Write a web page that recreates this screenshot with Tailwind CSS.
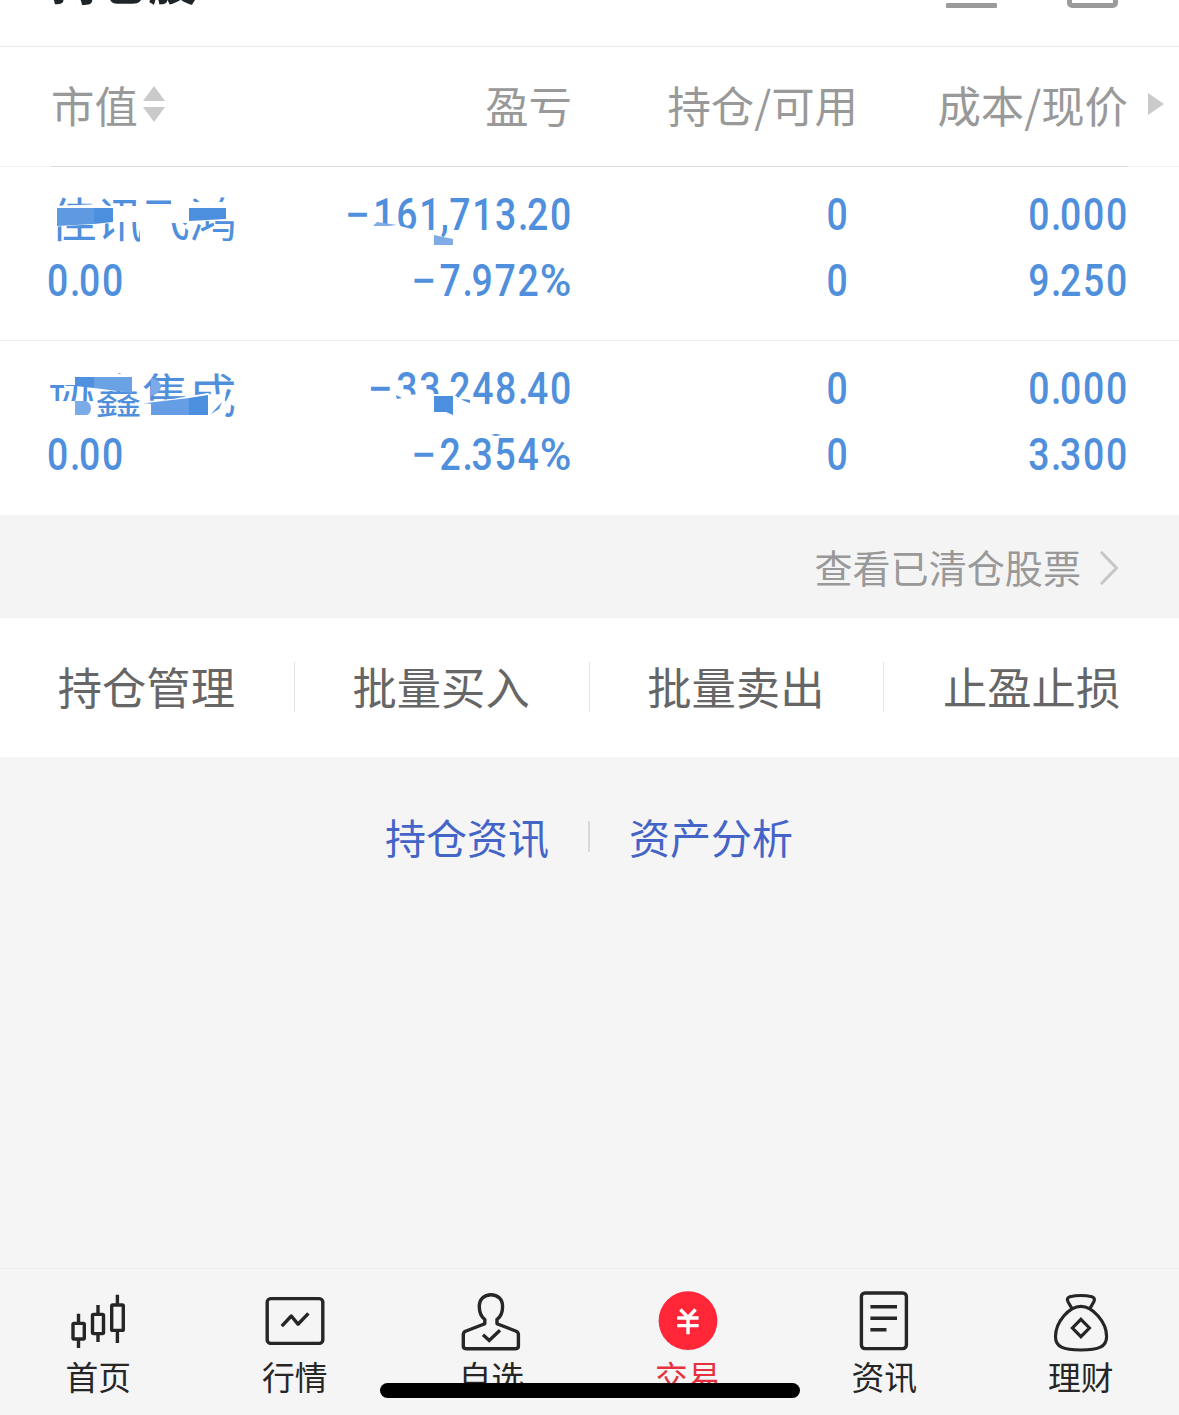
<!DOCTYPE html>
<html lang="zh-CN">
<head>
<meta charset="utf-8">
<title>持仓股</title>
<script src="https://cdn.jsdelivr.net/npm/@tailwindcss/browser@4"></script>
</head>
<body class="w-[1179px] h-[1415px] overflow-hidden bg-[#f5f5f5] font-['Noto_Sans_CJK_SC',sans-serif]">
<div class="relative flex flex-col w-[1179px] h-[1415px] overflow-hidden">

  <!-- Title bar, scrolled mostly out of view -->
  <header class="h-[47px] shrink-0 bg-white border-b border-[#e9e9e9] flex items-start justify-between pl-[51px] pr-[61px] overflow-hidden">
    <h1 class="-mt-[51px] text-[48.5px] leading-[60px] font-bold text-[#1f2428]">持仓股</h1>
    <div class="flex items-start gap-[70px]">
      <div class="mt-[3px] w-[51px] h-[5px] bg-[#9b9b9b] rounded-[1px]"></div>
      <div class="-mt-[42px] w-[51px] h-[50px] border-[5px] border-[#9b9b9b] rounded-[5px]"></div>
    </div>
  </header>

  <!-- Holdings table -->
  <section class="shrink-0 bg-white">
    <div class="h-[119px] pb-[6px] grid grid-cols-[280px_292px_286px_270px_51px] items-center text-[43.4px] leading-[60px] text-[#999] whitespace-nowrap">
      <div class="pl-[51px] flex items-center">市值
        <svg class="ml-[5px]" width="22" height="36" viewBox="0 0 22 36" fill="#cacaca"><path d="M11 0L22 15H0zM11 36L22 21H0z"/></svg>
      </div>
      <div class="text-right">盈亏</div>
      <div class="text-right">持仓/可用</div>
      <div class="text-right">成本/现价</div>
      <svg class="ml-[20px]" width="16" height="22" viewBox="0 0 16 22" fill="#cacaca"><path d="M0 0L16 11L0 22z"/></svg>
    </div>
    <div class="h-px bg-[#f2f2f2] px-[51px]"><div class="h-px bg-[#dcdcdc]"></div></div>

    <!-- Row 1 -->
    <div class="relative h-[174px] pt-[15px] border-b border-[#ececec] grid grid-cols-[280px_292px_286px_270px] text-[#4f8fdb]">
      <div>
        <div class="pl-[50px] h-[66px] pt-[2px] text-[46.6px] leading-[66px]">佳讯飞鸿</div>
        <div class="pl-[47px] font-[Roboto] font-medium text-[44px] leading-[66px] tracking-[2px]"><span class="inline-block origin-left scale-x-[.85]">0<i class="not-italic tracking-[-1.6px]">.</i>00</span></div>
      </div>
      <div class="-mr-[1px] font-[Roboto] font-medium text-[44px] leading-[66px] tracking-[2px] text-right origin-right scale-x-[.85]"><div><span class="inline-block origin-right scale-x-[1.2] mr-[1px]">−</span>161<i class="not-italic -ml-[2px] tracking-[.4px]">,</i>713<i class="not-italic tracking-[-1.6px]">.</i>20</div><div><span class="inline-block origin-right scale-x-[1.2] mr-[1px]">−</span>7<i class="not-italic tracking-[-1.6px]">.</i>972<span class="inline-block origin-right scale-x-[1.15] ml-[4px]">%</span></div></div>
      <div class="pr-[10px] font-[Roboto] font-medium text-[44px] leading-[66px] tracking-[2px] text-right origin-right scale-x-[.85]"><div>0</div><div>0</div></div>
      <div class="-mr-[1px] font-[Roboto] font-medium text-[44px] leading-[66px] tracking-[2px] text-right origin-right scale-x-[.85]"><div>0<i class="not-italic tracking-[-1.6px]">.</i>000</div><div>9<i class="not-italic tracking-[-1.6px]">.</i>250</div></div>
      <!-- Redaction marks -->
      <svg class="absolute left-0 top-0" width="600" height="174" viewBox="0 167 600 174">
        <g fill="#fff">
          <path d="M50 206L104 204L114 208V223L50 227z"/>
          <path d="M100 206H140V204.500H190V222H100zM140 205H165V245H140zM171 196H189V223H171zM186 202H240V219L226 221H186z"/>
          <path d="M372 226L396 225L412 229L422 227V236H372z"/>
        </g>
        <path fill="#5e99e1" d="M57 208H94V224L57 226z"/>
        <path fill="#4d8fdf" d="M94 208H113V222L94 224zM189 208H226V219L189 221z"/>
        <path fill="#80ace6" d="M377 222L397 225L388 226L373 226zM434 235L453 239V245H434z"/>
      </svg>
    </div>

    <!-- Row 2 -->
    <div class="relative h-[174px] pt-[15px] grid grid-cols-[280px_292px_286px_270px] text-[#4f8fdb]">
      <div>
        <div class="pl-[48px] h-[66px] pt-[4px] text-[47px] leading-[66px]">协鑫集成</div>
        <div class="pl-[47px] font-[Roboto] font-medium text-[44px] leading-[66px] tracking-[2px]"><span class="inline-block origin-left scale-x-[.85]">0<i class="not-italic tracking-[-1.6px]">.</i>00</span></div>
      </div>
      <div class="-mr-[1px] font-[Roboto] font-medium text-[44px] leading-[66px] tracking-[2px] text-right origin-right scale-x-[.85]"><div><span class="inline-block origin-right scale-x-[1.2] mr-[1px]">−</span>33<i class="not-italic -ml-[2px] tracking-[.4px]">,</i>248<i class="not-italic tracking-[-1.6px]">.</i>40</div><div><span class="inline-block origin-right scale-x-[1.2] mr-[1px]">−</span>2<i class="not-italic tracking-[-1.6px]">.</i>354<span class="inline-block origin-right scale-x-[1.15] ml-[4px]">%</span></div></div>
      <div class="pr-[10px] font-[Roboto] font-medium text-[44px] leading-[66px] tracking-[2px] text-right origin-right scale-x-[.85]"><div>0</div><div>0</div></div>
      <div class="-mr-[1px] font-[Roboto] font-medium text-[44px] leading-[66px] tracking-[2px] text-right origin-right scale-x-[.85]"><div>0<i class="not-italic tracking-[-1.6px]">.</i>000</div><div>3<i class="not-italic tracking-[-1.6px]">.</i>300</div></div>
      <!-- Redaction marks -->
      <svg class="absolute left-0 top-0" width="600" height="174" viewBox="0 341 600 174">
        <g fill="#fff">
          <path d="M48 368H97V385H48zM48 401H96V422H48zM97 374H141V391H97z"/>
          <path d="M142 404L208 393L214 396L226 394L224 404L228 410L222 422H142z"/>
          <path d="M393 395L440 394V382H449V394L456 396L460 399L472 404V412L455 416H393z"/>
        </g>
        <path fill="#4f90df" d="M75 377H94V388L75 386z"/>
        <path fill="#6ba2e6" d="M94 377H132V393L94 388z"/>
        <path fill="#7aaae8" d="M75 401H86Q91 403 91 409Q90 415 86 415H75zM151 378Q161 380 161 387Q160 394 151 396z"/>
        <path fill="#659ee4" d="M146 403L189 398V415H151V404z"/>
        <path fill="#4d8fdf" d="M189 398L208 395V415H189zM434 396H453V415L446 412L434 412zM396 395L402 398L397 399zM461 399L470 400V403zM491 435Q496 433 501 435L496 436z"/>
        <path fill="#fff" d="M208 402Q212 394 220 394L226 402L216 415H208z"/>
        <path fill="#4d8fdf" d="M211 414L222 402L219 409z"/>
      </svg>
    </div>
  </section>

  <div class="h-[103px] shrink-0 bg-[#f4f4f4] flex items-center justify-end pr-[60px] gap-[18px] text-[38.1px] leading-[60px] text-[#999]">
    <span>查看已清仓股票</span>
    <svg class="mt-[3px]" width="20" height="34" viewBox="0 0 20 34" fill="none" stroke="#c6c6c6" stroke-width="3"><path d="M2 1L17.5 17L2 33"/></svg>
  </div>

  <nav class="h-[139px] pb-[4px] shrink-0 bg-white grid grid-cols-4 items-center text-center text-[44.3px] leading-[60px] text-[#666]">
    <div class="relative pr-[2px]">持仓管理<i class="absolute right-0 top-[6px] w-px h-[50px] bg-[#e6e6e6]"></i></div>
    <div class="relative pr-[2px]">批量买入<i class="absolute right-0 top-[6px] w-px h-[50px] bg-[#e6e6e6]"></i></div>
    <div class="relative pr-[2px]">批量卖出<i class="absolute right-0 top-[6px] w-px h-[50px] bg-[#e6e6e6]"></i></div>
    <div>止盈止损</div>
  </nav>

  <div class="pt-[49px] pr-px flex items-center justify-center text-[41px] leading-[60px] text-[#4464c8]">
    <span>持仓资讯</span><i class="mx-[39px] w-[2px] h-[31px] bg-[#dadada]"></i><span>资产分析</span>
  </div>

  <!-- Bottom tab bar -->
  <footer class="mt-auto h-[147px] shrink-0 border-t border-[#ececec] bg-[#f5f5f5] pt-[20px] grid grid-cols-6 text-[32.8px] leading-[46px] text-[#262626]">
    <div class="flex flex-col items-center">
      <svg width="64" height="64" viewBox="0 0 64 64" fill="none" stroke="#262626" stroke-width="3.4"><rect x="7" y="34.4" width="11.3" height="15.6" rx="1"/><rect x="26.5" y="25.4" width="11" height="19.2" rx="1"/><rect x="45.7" y="16" width="11.6" height="25.4" rx="1"/><path d="M12.5 24.7V34M12.5 50V59M32 16V25M32 45V53M51.4 5.7V16M51.4 42V54"/></svg>
      <span>首页</span>
    </div>
    <div class="flex flex-col items-center">
      <svg class="-ml-px" width="64" height="64" viewBox="0 0 64 64" fill="none" stroke="#262626" stroke-width="3.4"><rect x="5.200" y="9.6" width="55.600" height="44.8" rx="3.5"/><path d="M19.8 37.2L29.300 27L36 35.2L46.400 24.4" stroke-linejoin="round"/></svg>
      <span>行情</span>
    </div>
    <div class="flex flex-col items-center">
      <svg width="64" height="64" viewBox="0 0 64 64" fill="none" stroke="#262626" stroke-width="3.4"><path d="M25.8 35.3V30.5C22.5 28 20.3 23.5 20.3 17.5C20.3 10 25.5 5.7 32 5.7S43.6 10 43.6 17.5C43.6 23.5 41.5 28 38 30.5V35.3M26.5 34.5L6.5 42.2Q4.3 43.2 4.3 45.8V57Q4.3 59.7 7 59.7H56.7Q59.4 59.7 59.4 57V45.8Q59.4 43.2 57.2 42.2L37.3 34.5"/><path d="M24 45.7L30.2 51.5L41 41.2"/></svg>
      <span>自选</span>
    </div>
    <div class="flex flex-col items-center text-[#e5323e]">
      <svg class="-ml-px" width="64" height="64" viewBox="0 0 64 64" fill="none" stroke="#fff" stroke-width="3.4"><g transform="translate(.6 0)"><circle cx="32.4" cy="31.7" r="29.4" fill="#ff2637" stroke="none"/><path d="M24.8 20.5L32.4 28.5L40 20.5M21.6 29H43M21.6 36.6H43M32.4 28V45.2"/></g></svg>
      <span>交易</span>
    </div>
    <div class="flex flex-col items-center">
      <svg width="64" height="64" viewBox="0 0 64 64" fill="none" stroke="#262626" stroke-width="3.4"><rect x="9.4" y="4" width="45" height="55.6" rx="3.5"/><path d="M18.4 17.7H45M18.4 29.2H45M18.4 40.8H34.5"/></svg>
      <span>资讯</span>
    </div>
    <div class="flex flex-col items-center">
      <svg class="-ml-px" width="64" height="64" viewBox="0 0 64 64" fill="none" stroke="#262626" stroke-width="3.2"><g transform="translate(.6 0)"><path d="M32.3 17.3C44 17.3 58 33 58 47.5C58 58 50 61 32.3 61S6.9 58 6.9 47.5C6.9 33 20.5 17.3 32.3 17.3Z"/><path d="M23.3 19.5L19.4 12.8Q17.6 9 21.2 7.8Q32.3 5.2 43.4 7.8Q47 9 45.2 12.8L41.3 19.5"/><path d="M32.3 30.4L40.8 39L32.3 47.6L23.8 39Z"/></g></svg>
      <span>理财</span>
    </div>
  </footer>

  <!-- Home indicator -->
  <div class="absolute left-[380px] top-[1383px] w-[420px] h-[15px] rounded-full bg-black"></div>
</div>
</body>
</html>
